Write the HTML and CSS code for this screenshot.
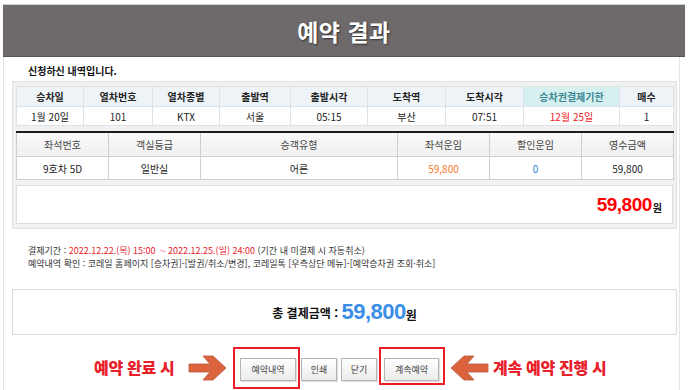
FILE: index.html
```html
<!DOCTYPE html>
<html lang="ko">
<head>
    <meta charset="UTF-8">
    <meta name="viewport" content="width=device-width, initial-scale=1.0">
    <title>예약 결과</title>
    <link rel="stylesheet" href="styles.css">
</head>
<body>
    <div class="page">
        <header class="top">
            <h1>예약 결과</h1>
        </header>

        <div class="content">
            <p class="intro">신청하신 내역입니다.</p>

            <section class="panel">
                <table class="trip">
                    <colgroup>
                        <col class="w67"><col class="w69"><col class="w67"><col class="w71"><col class="w77">
                        <col class="w78"><col class="w78"><col class="w96"><col class="w54">
                    </colgroup>
                    <tr>
                        <th>승차일</th>
                        <th>열차번호</th>
                        <th>열차종별</th>
                        <th>출발역</th>
                        <th>출발시각</th>
                        <th>도착역</th>
                        <th>도착시각</th>
                        <th class="deadline">승차권결제기한</th>
                        <th>매수</th>
                    </tr>
                    <tr>
                        <td>1월 20일</td>
                        <td>101</td>
                        <td>KTX</td>
                        <td>서울</td>
                        <td>05:15</td>
                        <td>부산</td>
                        <td>07:51</td>
                        <td class="red">12월 25일</td>
                        <td>1</td>
                    </tr>
                </table>

                <table class="fare">
                    <colgroup>
                        <col class="w92"><col class="w92"><col class="w197"><col class="w92"><col class="w92"><col class="w92">
                    </colgroup>
                    <tr>
                        <th>좌석번호</th>
                        <th>객실등급</th>
                        <th>승객유형</th>
                        <th>좌석운임</th>
                        <th>할인운임</th>
                        <th>영수금액</th>
                    </tr>
                    <tr>
                        <td>9호차 5D</td>
                        <td>일반실</td>
                        <td>어른</td>
                        <td class="orange">59,800</td>
                        <td class="blue">0</td>
                        <td>59,800</td>
                    </tr>
                </table>

                <div class="sum">
                    <span class="sum-num">59,800</span><span class="won">원</span>
                </div>
            </section>

            <div class="notes">
                <p>결제기간 : <span class="red">2022.12.22.(목) 15:00 &nbsp;~ 2022.12.25.(일) 24:00</span> (기간 내 미결제 시 자동취소)</p>
                <p>예약내역 확인 : 코레일 홈페이지 [승차권]-[발권/취소/변경], 코레일톡 [우측상단 메뉴]-[예약승차권 조회·취소]</p>
            </div>

            <div class="total">
                <span class="total-label">총 결제금액 : </span><span class="total-num">59,800</span><span class="total-won">원</span>
            </div>

            <div class="actions">
                <span class="note note-left">예약 완료 시</span>
                <svg class="arrow arrow-right" width="40" height="28" viewBox="0 0 40 28">
                    <polygon points="1,10 22,10 15,2 25,2 38,14 25,26 15,26 22,18 1,18" fill="#db643e" stroke="#b9553a" stroke-width="0.8"/>
                </svg>
                <div class="mark mark-left">
                    <button class="btn btn-list">예약내역</button>
                </div>
                <button class="btn btn-print">인쇄</button>
                <button class="btn btn-close">닫기</button>
                <div class="mark mark-right">
                    <button class="btn btn-more">계속예약</button>
                </div>
                <svg class="arrow arrow-left" width="40" height="28" viewBox="0 0 40 28">
                    <polygon points="39,10 18,10 25,2 15,2 2,14 15,26 25,26 18,18 39,18" fill="#db643e" stroke="#b9553a" stroke-width="0.8"/>
                </svg>
                <span class="note note-right">계속 예약 진행 시</span>
            </div>
        </div>
    </div>
</body>
</html>
```

FILE: styles.css
```css
body {
    margin: 0;
    padding: 0;
    background-color: #fff;
    font-family: "Noto Sans CJK KR", "Noto Sans", sans-serif;
    color: #333;
}

p {
    margin: 0;
}

.page {
    margin: 4px 0 0 3px;
    width: 677px;
    height: 386px;
    border-left: 1px solid #e6e6e6;
    border-right: 1px solid #e6e6e6;
    box-sizing: border-box;
}

.top {
    margin-left: -1px;
    width: 682px;
    height: 51px;
    border-top: 1px solid #cfcfcf;
    border-bottom: 1px solid #5a5657;
    background-color: #6e6a6b;
    display: flex;
    align-items: center;
    justify-content: center;
}

.top h1 {
    margin: 0;
    color: #fff;
    font-size: 23px;
    font-weight: 700;
    letter-spacing: 0.5px;
    text-shadow: 1px 1px 2px rgba(0, 0, 0, 0.55);
}

.content {
    padding: 0 2px 0 8px;
}

.intro {
    padding: 7px 0 0 16px;
    height: 15px;
    line-height: 14px;
    font-size: 10px;
    font-weight: 700;
    color: #111;
}

.panel {
    margin-top: 2px;
    width: 665px;
    box-sizing: border-box;
    padding: 4px 3px;
    background-color: #f1f1f1;
    border: 1px solid #e1e1e1;
}

table {
    width: 657px;
    border-collapse: collapse;
    table-layout: fixed;
    background-color: #fff;
    font-size: 10px;
    text-align: center;
}

.w54 { width: 54px; }
.w67 { width: 67px; }
.w69 { width: 69px; }
.w71 { width: 71px; }
.w77 { width: 77px; }
.w78 { width: 78px; }
.w92 { width: 92px; }
.w96 { width: 96px; }
.w197 { width: 197px; }

th, td {
    padding: 0;
    overflow: hidden;
    white-space: nowrap;
}

.trip th, .trip td {
    border: 1px solid #dde2e6;
}

.trip th {
    height: 19px;
    background-color: #eef3f8;
    font-weight: 700;
    color: #222;
}

.trip th.deadline {
    background-color: #d6f0f0;
    color: #3b8795;
}

.trip td {
    height: 18px;
    color: #222;
}

.fare {
    margin-top: 5px;
    border-top: 2px solid #1c1c1c;
}

.fare th, .fare td {
    border: 1px solid #cfcfcf;
}

.fare tr:first-child th {
    border-top: none;
}

.fare th {
    height: 23px;
    background: linear-gradient(#f9f9f9, #f0f0f0);
    font-weight: 400;
    color: #444;
}

.fare td {
    height: 22px;
    color: #222;
}

.red,
table td.red {
    color: #f0191f;
}

table td.orange {
    color: #f5772a;
}

table td.blue {
    color: #2a7fdc;
}

.sum {
    margin-top: 5px;
    height: 39px;
    box-sizing: border-box;
    background-color: #fff;
    border: 1px solid #dedede;
    display: flex;
    align-items: center;
    justify-content: flex-end;
    padding-right: 10px;
}

.sum-num {
    font-family: "Liberation Sans", Arial, sans-serif;
    font-size: 19px;
    font-weight: 700;
    color: #f00;
    letter-spacing: -0.5px;
}

.won {
    margin-left: 1px;
    margin-top: 5px;
    font-size: 10px;
    font-weight: 700;
    color: #111;
}

.notes {
    margin-top: 15px;
    padding-left: 16px;
    font-size: 9px;
    line-height: 13px;
    color: #333;
}

.notes .red {
    color: #e8202a;
}

.total {
    margin-top: 19px;
    width: 665px;
    height: 46px;
    box-sizing: border-box;
    border: 1px solid #dcdcdc;
    display: flex;
    align-items: center;
    justify-content: center;
}

.total-label {
    font-size: 12px;
    font-weight: 700;
    color: #111;
    white-space: pre;
}

.total-num {
    font-family: "Liberation Sans", Arial, sans-serif;
    font-size: 22px;
    font-weight: 700;
    color: #3a8ee8;
    letter-spacing: -0.5px;
}

.total-won {
    margin-top: 4px;
    font-size: 12px;
    font-weight: 700;
    color: #111;
}

.actions {
    margin-top: 12px;
    padding-left: 82px;
    display: flex;
    align-items: flex-start;
}

.note {
    margin-top: 9px;
    line-height: 22px;
    font-size: 16px;
    font-weight: 900;
    color: #e8202a;
    white-space: nowrap;
    letter-spacing: -0.3px;
}

.note-left {
    width: 94px;
}

.arrow {
    margin-top: 7px;
    flex: none;
}

.arrow-right {
    margin-right: 5px;
}

.arrow-left {
    margin-left: 4px;
    margin-right: 4px;
}

.mark {
    border: 2px solid #ec1c24;
    box-sizing: border-box;
    display: flex;
}

.mark-left {
    width: 67px;
    height: 42px;
    padding: 9px 0 0 5px;
}

.mark-right {
    margin-left: 2px;
    width: 66px;
    height: 38px;
    padding: 9px 0 0 3px;
}

.btn {
    height: 23px;
    padding: 0;
    box-sizing: border-box;
    background: linear-gradient(#ffffff, #ebebeb);
    border: 1px solid #b4b4b4;
    box-shadow: 1px 1px 1px rgba(0, 0, 0, 0.12);
    font-family: "Noto Sans CJK KR", "Noto Sans", sans-serif;
    font-size: 9px;
    color: #444;
    cursor: pointer;
}

.btn-list {
    width: 56px;
}

.btn-print {
    margin-top: 11px;
    margin-left: 1px;
    width: 36px;
}

.btn-close {
    margin-top: 11px;
    margin-left: 4px;
    width: 36px;
}

.btn-more {
    width: 55px;
}
```
